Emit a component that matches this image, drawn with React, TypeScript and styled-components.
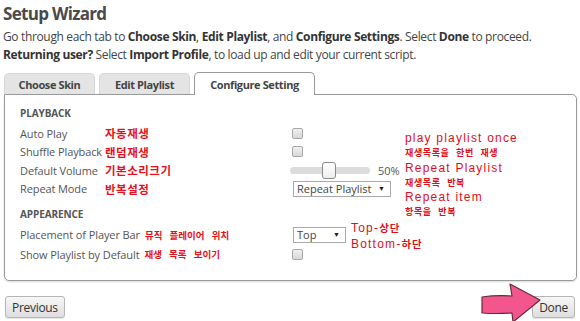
import styled, { createGlobalStyle } from 'styled-components';

const GlobalStyle = createGlobalStyle`
  html, body {
    margin: 0;
    padding: 0;
    background: #ffffff;
  }
  body {
    font-family: 'Open Sans', 'Noto Sans', sans-serif;
    color: #444;
  }
`;

const Page = styled.div`
  position: relative;
  width: 580px;
  height: 321px;
  padding: 3px 4px 0 4px;
  box-sizing: border-box;
  overflow: hidden;
`;

const Title = styled.h1`
  margin: 0 0 3px -1px;
  font-size: 17px;
  line-height: 22px;
  font-weight: 700;
  letter-spacing: -0.7px;
  color: #4a4a4a;
`;

const Intro = styled.p`
  margin: 0 0 0 -1px;
  font-size: 12px;
  line-height: 18px;
  letter-spacing: -0.35px;
  color: #444;
  white-space: nowrap;

  b {
    font-weight: 700;
    color: #333;
  }
`;

const TabRow = styled.div`
  display: flex;
  align-items: flex-end;
  gap: 4px;
  margin-top: 4px;
  height: 26px;
`;

const Tab = styled.div<{ $active?: boolean }>`
  box-sizing: border-box;
  width: ${(p) => (p.$active ? '121px' : '91px')};
  height: ${(p) => (p.$active ? '23px' : '21px')};
  display: flex;
  align-items: center;
  justify-content: center;
  font-size: 11px;
  font-weight: 700;
  letter-spacing: -0.4px;
  color: #444;
  background: ${(p) => (p.$active ? '#ffffff' : '#e4e4e4')};
  border: 1px solid ${(p) => (p.$active ? '#9a9a9a' : '#d6d6d6')};
  border-bottom: none;
  border-radius: 5px 5px 0 0;
  margin-bottom: ${(p) => (p.$active ? '-1px' : '0')};
  position: relative;
  z-index: ${(p) => (p.$active ? 1 : 0)};
`;

const Panel = styled.div`
  position: relative;
  box-sizing: border-box;
  width: 573px;
  height: 187px;
  border: 1px solid #9a9a9a;
  border-radius: 0 5px 5px 5px;
  box-shadow: 0 1px 2px rgba(0, 0, 0, 0.15);
  padding: 9px 15px 0 15px;
`;

const SectionHead = styled.div<{ $gap?: number }>`
  font-size: 10px;
  font-weight: 700;
  line-height: 18px;
  letter-spacing: -0.1px;
  color: #555;
  margin-top: ${(p) => p.$gap ?? 0}px;
  margin-bottom: 2px;
`;

const Rows = styled.div<{ $row: number }>`
  display: grid;
  grid-template-columns: 270px 1fr;
  grid-auto-rows: ${(p) => p.$row}px;
  align-items: center;
`;

const LabelCell = styled.div`
  display: flex;
  align-items: center;
  font-size: 11px;
  color: #555;
  white-space: nowrap;
`;

const LabelText = styled.span<{ $width?: number }>`
  display: inline-block;
  width: ${(p) => (p.$width ? `${p.$width}px` : 'auto')};
  margin-right: ${(p) => (p.$width ? 0 : 5)}px;
  letter-spacing: -0.1px;
`;

const Note = styled.span<{ $compact?: boolean }>`
  font-family: 'Noto Sans CJK KR', sans-serif;
  font-weight: 700;
  font-size: ${(p) => (p.$compact ? 9.5 : 11.5)}px;
  color: #e8101a;
  letter-spacing: ${(p) => (p.$compact ? 0 : 0.5)}px;
  word-spacing: ${(p) => (p.$compact ? 5 : 0)}px;
`;

const ControlCell = styled.div`
  display: flex;
  align-items: center;
  font-size: 11px;
  color: #555;
`;

const Checkbox = styled.span`
  box-sizing: border-box;
  display: inline-block;
  width: 11px;
  height: 11px;
  margin-left: 2px;
  border: 1px solid #a8a8a8;
  border-radius: 2px;
  background: linear-gradient(#f0f0f0, #d8d8d8);
`;

const Track = styled.div`
  position: relative;
  width: 80px;
  height: 7px;
  border-radius: 4px;
  background: #dcdcdc;
`;

const Thumb = styled.div`
  position: absolute;
  top: -5px;
  box-sizing: border-box;
  width: 14px;
  height: 17px;
  border: 1px solid #8a8a8a;
  border-radius: 3px;
  background: linear-gradient(#ffffff, #eeeeee);
`;

const Percent = styled.span`
  margin-left: 8px;
  font-size: 11px;
  color: #555;
`;

const Select = styled.div<{ $width: number }>`
  box-sizing: border-box;
  width: ${(p) => p.$width}px;
  height: 16px;
  margin-left: 3px;
  padding: 0 5px 0 3px;
  display: flex;
  align-items: center;
  justify-content: space-between;
  border: 1px solid #a9a9a9;
  font-size: 11px;
  color: #444;
  background: #fff;
  white-space: nowrap;

  &::after {
    content: '▼';
    font-size: 7px;
    color: #222;
  }
`;

const SideNote = styled.div`
  align-self: flex-start;
  margin: 2px 0 0 5px;
`;

const RedText = styled.div<{ $small?: boolean }>`
  font-family: ${(p) =>
    p.$small ? "'Noto Sans CJK KR', sans-serif" : "'Liberation Sans', Arial, 'Noto Sans CJK KR', sans-serif"};
  font-weight: ${(p) => (p.$small ? 700 : 400)};
  font-size: ${(p) => (p.$small ? 9 : 12)}px;
  line-height: ${(p) => (p.$small ? 13 : 15)}px;
  letter-spacing: ${(p) => (p.$small ? 0.6 : 1.2)}px;
  word-spacing: ${(p) => (p.$small ? 4 : 0)}px;
  color: #e0101a;
  white-space: nowrap;
`;

const Hangul = styled.span`
  font-family: 'Noto Sans CJK KR', sans-serif;
  font-size: 10.5px;
  font-weight: 700;
  letter-spacing: 1px;
`;

const NoteBlock = styled.div`
  position: absolute;
  left: 400px;
  top: 36px;
  display: flex;
  flex-direction: column;
  gap: 1.5px;
`;

const NoteGroup = styled.div``;

const Footer = styled.div`
  display: flex;
  justify-content: space-between;
  align-items: center;
  margin-top: 15px;
  padding: 0 1px 0 1px;
`;

const Button = styled.button`
  box-sizing: border-box;
  height: 22px;
  padding: 0 6px;
  font-family: 'Open Sans', sans-serif;
  font-size: 12px;
  letter-spacing: -0.3px;
  color: #333;
  border: 1px solid #b5b5b5;
  border-radius: 3px;
  background: linear-gradient(#f7f7f7, #dedede);
  box-shadow: 0 1px 1px rgba(0, 0, 0, 0.1);
`;

const Arrow = styled.svg`
  position: absolute;
  left: 478px;
  top: 283px;
`;

export default function App() {
  return (
    <Page>
      <GlobalStyle />
      <Title>Setup Wizard</Title>
      <Intro>
        Go through each tab to <b>Choose Skin</b>, <b>Edit Playlist</b>, and <b>Configure Settings</b>.
        Select <b>Done</b> to proceed.
        <br />
        <b>Returning user?</b> Select <b>Import Profile</b>, to load up and edit your current script.
      </Intro>

      <TabRow>
        <Tab>Choose Skin</Tab>
        <Tab>Edit Playlist</Tab>
        <Tab $active>Configure Setting</Tab>
      </TabRow>

      <Panel>
        <SectionHead>PLAYBACK</SectionHead>
        <Rows $row={18.5}>
          <LabelCell>
            <LabelText $width={85}>Auto Play</LabelText>
            <Note>자동재생</Note>
          </LabelCell>
          <ControlCell>
            <Checkbox />
          </ControlCell>

          <LabelCell>
            <LabelText $width={85}>Shuffle Playback</LabelText>
            <Note>랜덤재생</Note>
          </LabelCell>
          <ControlCell>
            <Checkbox />
          </ControlCell>

          <LabelCell>
            <LabelText $width={85}>Default Volume</LabelText>
            <Note>기본소리크기</Note>
          </LabelCell>
          <ControlCell>
            <Track>
              <Thumb style={{ left: `${50 * 0.8 - 8}px` }} />
            </Track>
            <Percent>50%</Percent>
          </ControlCell>

          <LabelCell>
            <LabelText $width={85}>Repeat Mode</LabelText>
            <Note>반복설정</Note>
          </LabelCell>
          <ControlCell>
            <Select $width={98}>Repeat Playlist</Select>
          </ControlCell>
        </Rows>

        <SectionHead $gap={7}>APPEARENCE</SectionHead>
        <Rows $row={19.5}>
          <LabelCell>
            <LabelText>Placement of Player Bar</LabelText>
            <Note $compact>뮤직 플레이어 위치</Note>
          </LabelCell>
          <ControlCell>
            <Select $width={53}>Top</Select>
            <SideNote>
              <RedText>
                Top-<Hangul>상단</Hangul>
              </RedText>
              <RedText>
                Bottom-<Hangul>하단</Hangul>
              </RedText>
            </SideNote>
          </ControlCell>

          <LabelCell>
            <LabelText>Show Playlist by Default</LabelText>
            <Note $compact>재생 목록 보이기</Note>
          </LabelCell>
          <ControlCell>
            <Checkbox />
          </ControlCell>
        </Rows>

        <NoteBlock>
          <NoteGroup>
            <RedText>play playlist once</RedText>
            <RedText $small>재생목록을 한번 재생</RedText>
          </NoteGroup>
          <NoteGroup>
            <RedText>Repeat Playlist</RedText>
            <RedText $small>재생목록 반복</RedText>
          </NoteGroup>
          <NoteGroup>
            <RedText>Repeat item</RedText>
            <RedText $small>항목을 반복</RedText>
          </NoteGroup>
        </NoteBlock>
      </Panel>

      <Footer>
        <Button>Previous</Button>
        <Button>Done</Button>
      </Footer>

      <Arrow width="70" height="40" viewBox="0 0 70 40">
        <path
          d="M4 14 Q18 12 34 13 L32 1 L62 17 L35 39 L34 30 Q18 31 4 30 Z"
          fill="#f2568c"
          stroke="#6b2a3c"
          strokeWidth="1.2"
          strokeLinejoin="round"
        />
      </Arrow>
    </Page>
  );
}
